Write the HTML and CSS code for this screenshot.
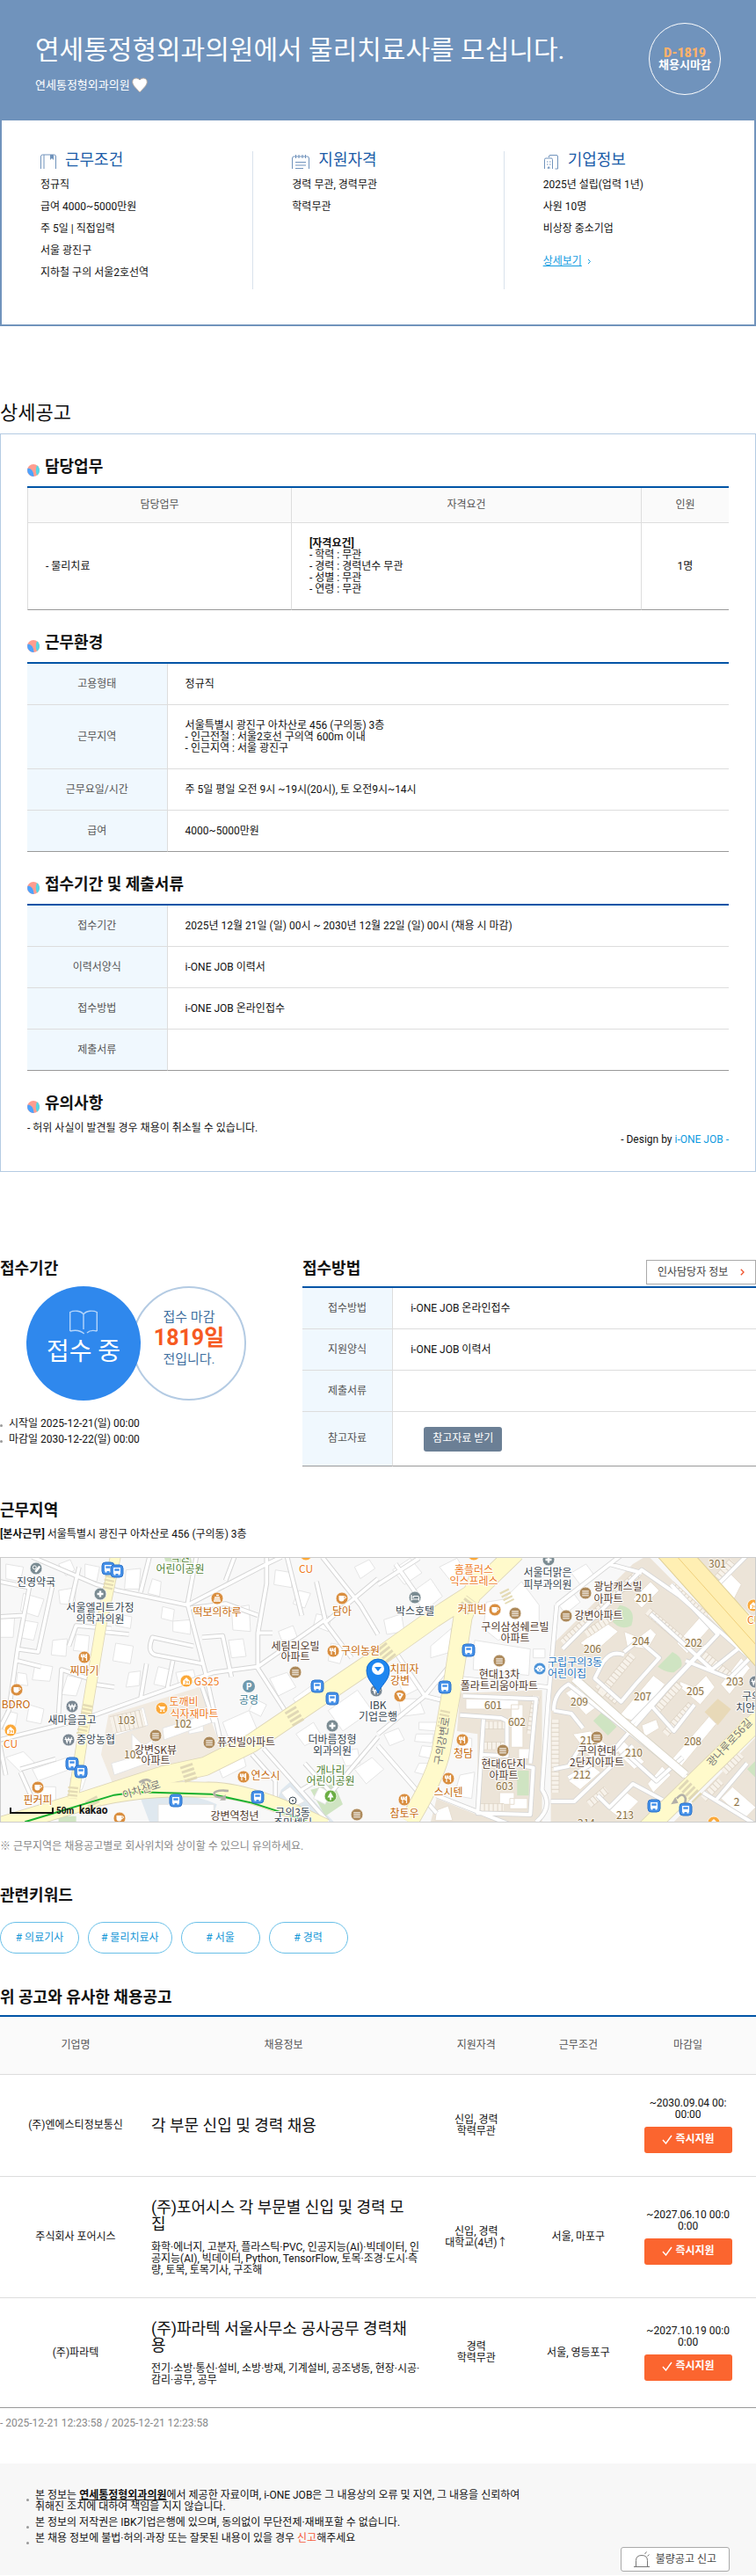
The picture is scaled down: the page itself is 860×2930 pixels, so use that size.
FILE: index.html
```html
<!DOCTYPE html>
<html lang="ko">
<head>
<meta charset="utf-8">
<meta name="viewport" content="width=device-width, initial-scale=1">
<title>연세통정형외과의원에서 물리치료사를 모십니다.</title>
<link rel="stylesheet" href="styles.css">
</head>
<body>
<svg class="defs" width="0" height="0" aria-hidden="true">
  <defs>
    <symbol id="mark" viewBox="0 0 14 14"><circle cx="7" cy="7" r="7" fill="#ff9d8f"/><path d="M11 1.300A7 7 0 0 1 11 12.700Q8.500 7 11 1.300z" fill="#55d7e6"/><path d="M.6 4.500Q7 5 7.600 13.900A7 7 0 0 1 .6 4.500z" fill="#4da3ff"/></symbol>
    <g id="bus"><rect x="-7" y="-7" width="14" height="14" rx="4" fill="#4590e8" stroke="#2d74cb"/><path d="M-4-4h8v7h-8z" fill="#fff"/><path d="M-2.700-2.700h5.400v2.500h-5.400z" fill="#4590e8"/><path d="M-3.500 3h2v1.500h-2zM1.500 3h2v1.500h-2z" fill="#fff"/></g>
    <g id="apt"><circle r="7" fill="#ad8a5c" stroke="#fff" stroke-width=".8"/><path d="M-3.500-3h7v6.500h-7z" fill="#fff"/><path d="M-2-4v8M0-4v8M2-4v8M-4-1h8M-4 1.500h8" stroke="#ad8a5c" stroke-width=".7"/></g>
    <g id="fork"><circle r="7" fill="#d98e3f" stroke="#fff" stroke-width=".8"/><path d="M-3.500-3.500v3h3v-3M-2-3.500v7.500M2.500 4v-7.500q-2 1-1.500 4h1.500" fill="none" stroke="#fff" stroke-width="1.200"/></g>
    <g id="cup"><circle r="7" fill="#d98e3f" stroke="#fff" stroke-width=".8"/><path d="M-3.500-3h6v3.500q0 3-3 3t-3-3z" fill="#fff"/><path d="M2.500-2q2-.5 2 1t-2.500 1.500" fill="none" stroke="#fff"/></g>
    <g id="store"><circle r="7" fill="#fba93a" stroke="#fff" stroke-width=".8"/><path d="M-4 0 0-4l4 4v4h-8z" fill="#fff"/><path d="M-2 0h1.500v3H-2M1 0v2h1.500M2.500 0v3" fill="none" stroke="#fba93a" stroke-width=".8"/></g>
    <g id="cart"><circle r="7" fill="#fba93a" stroke="#fff" stroke-width=".8"/><path d="M-4-3h1.500l.8 1H4L3 1.500h-4.500z" fill="#fff"/><circle cx="-1" cy="3.200" r="1" fill="#fff"/><circle cx="2.500" cy="3.200" r="1" fill="#fff"/></g>
    <g id="plus"><circle r="7" fill="#7a8b92" stroke="#fff" stroke-width=".8"/><path d="M0-3.500v7M-3.500 0h7" stroke="#fff" stroke-width="2.400"/></g>
    <g id="won"><circle r="7" fill="#7a8792" stroke="#fff" stroke-width=".8"/><path d="M-3.500-3l1.700 6L0-2l1.800 5 1.700-6M-4.500-.5h9" fill="none" stroke="#fff" stroke-width="1.200"/></g>
    <g id="pill"><circle r="7" fill="#7a8b92" stroke="#fff" stroke-width=".8"/><circle cx="-1.700" cy="-1.200" r="2" fill="none" stroke="#fff"/><path d="M0 3l3.500-4.500" stroke="#fff" stroke-width="2.800" stroke-linecap="round"/></g>
    <g id="bed"><circle r="7" fill="#7a8b92" stroke="#fff" stroke-width=".8"/><path d="M-4-3v6.500M-4 2h8.500v1.500M-1.500.5V-1.500h5q1 0 1 3M-3.300-.5h1" fill="none" stroke="#fff" stroke-width="1.200"/></g>
    <g id="cake"><circle r="7" fill="#d98e3f" stroke="#fff" stroke-width=".8"/><path d="M-4 3h8M-3.500 1h7M-3-1h6M-1-3.500h3" stroke="#fff" stroke-width="1.300"/></g>
    <g id="pizza"><circle r="7" fill="#d98e3f" stroke="#fff" stroke-width=".8"/><path d="M-4-3Q0-5 4-2L0 4.500z" fill="#fff"/><circle cx="0" cy="-1" r="1" fill="#d98e3f"/></g>
    <g id="tree"><circle r="7" fill="#6cae45" stroke="#fff" stroke-width=".8"/><path d="M0-5l3.500 6.500h-7zM-.8 1h1.600v3.500H-.8z" fill="#fff"/></g>
    <g id="kid"><circle r="7" fill="#4c93d8" stroke="#fff" stroke-width=".8"/><circle r="3.600" fill="#fff"/><circle cx="-4" r="1" fill="#fff"/><circle cx="4" r="1" fill="#fff"/><path d="M-1.500-.8v1M1.500-.8v1M-1 1.700h2" stroke="#4c93d8"/></g>
  </defs>
</svg>

<header class="hero">
  <div class="hero-text">
    <h1>연세통정형외과의원에서 물리치료사를 모십니다.</h1>
    <p class="hero-company">연세통정형외과의원
      <button class="like" type="button" aria-label="관심기업"><svg width="18" height="18" viewBox="0 0 18 18"><path d="M9 17C5 12.500.7 9 .7 5.200.7 0 7 0 9 3c2-3 8.300-3 8.300 2.200C17.300 9 13 12.500 9 17z" fill="#fff" stroke="#b3a79f"/></svg></button>
    </p>
  </div>
  <p class="dday"><strong>D-1819</strong><span>채용시마감</span></p>
</header>

<section class="summary">
  <div class="summary-col">
    <h2><svg width="18" height="18" viewBox="0 0 18 18"><path d="M4 17V1H2.500Q.5 1 .5 3v14M4 1h11.500q2 0 2 2v14" fill="none" stroke="#7093bc"/><path d="M11 1h4v6l-2-2-2 2z" fill="#7093bc"/></svg>근무조건</h2>
    <ul><li>정규직</li><li>급여 4000~5000만원</li><li>주 5일 | 직접입력</li><li>서울 광진구</li><li>지하철 구의 서울2호선역</li></ul>
  </div>
  <div class="summary-col">
    <h2><svg width="20" height="18" viewBox="0 0 20 18"><path d="M.5 17V5q0-2 2-2h15q2 0 2 2v12M4.500 1v4M8 1v4M12 1v4M15.500 1v4M4 9.500h12M4 13h12M4 16.500h9" fill="none" stroke="#7093bc"/></svg>지원자격</h2>
    <ul><li>경력 무관, 경력무관</li><li>학력무관</li></ul>
  </div>
  <div class="summary-col">
    <h2><svg width="18" height="18" viewBox="0 0 18 18"><path d="M1.500 17V6.500q0-1.500 1.500-1.500h6q1.500 0 1.500 1.500V17M6.500 4V3q0-1.500 1.500-1.500h7q1.500 0 1.500 1.500v14h-3" fill="none" stroke="#7093bc"/><path d="M4 9h1.500M7 9h1.500M4 12h1.500M7 12h1.500M5.500 17v-2h1.500v2" stroke="#7093bc" fill="none"/></svg>기업정보</h2>
    <ul><li>2025년 설립(업력 1년)</li><li>사원 10명</li><li>비상장 중소기업</li></ul>
    <a class="more" href="#company"><span>상세보기</span><svg width="5" height="7" viewBox="0 0 5 7"><path d="M1 1l2.500 2.500L1 6" fill="none" stroke="#0f9be0"/></svg></a>
  </div>
</section>

<main>
<h2 class="detail-title">상세공고</h2>
<section class="detail">
  <h3><svg width="14" height="14"><use href="#mark"/></svg>담당업무</h3>
  <table class="grid duties">
    <colgroup><col class="w-duty"><col class="w-req"><col class="w-num"></colgroup>
    <thead><tr><th scope="col">담당업무</th><th scope="col">자격요건</th><th scope="col">인원</th></tr></thead>
    <tbody><tr><td>- 물리치료</td><td><strong>[자격요건]</strong><br>- 학력 : 무관<br>- 경력 : 경력년수 무관<br>- 성별 : 무관<br>- 연령 : 무관</td><td class="center">1명</td></tr></tbody>
  </table>

  <h3><svg width="14" height="14"><use href="#mark"/></svg>근무환경</h3>
  <table class="grid info">
    <tbody>
      <tr><th scope="row">고용형태</th><td>정규직</td></tr>
      <tr class="tall"><th scope="row">근무지역</th><td>서울특별시 광진구 아차산로 456 (구의동) 3층<br>- 인근전철 : 서울2호선 구의역 600m 이내<br>- 인근지역 : 서울 광진구</td></tr>
      <tr><th scope="row">근무요일/시간</th><td>주 5일 평일 오전 9시 ~19시(20시), 토 오전9시~14시</td></tr>
      <tr><th scope="row">급여</th><td>4000~5000만원</td></tr>
    </tbody>
  </table>

  <h3><svg width="14" height="14"><use href="#mark"/></svg>접수기간 및 제출서류</h3>
  <table class="grid info">
    <tbody>
      <tr><th scope="row">접수기간</th><td>2025년 12월 21일 (일) 00시 ~ 2030년 12월 22일 (일) 00시 (채용 시 마감)</td></tr>
      <tr><th scope="row">이력서양식</th><td>i-ONE JOB 이력서</td></tr>
      <tr><th scope="row">접수방법</th><td>i-ONE JOB 온라인접수</td></tr>
      <tr><th scope="row">제출서류</th><td></td></tr>
    </tbody>
  </table>

  <h3><svg width="14" height="14"><use href="#mark"/></svg>유의사항</h3>
  <p>- 허위 사실이 발견될 경우 채용이 취소될 수 있습니다.</p>
  <p class="credit">- Design by <span>i-ONE JOB -</span></p>
</section>

<div class="apply">
  <section>
    <h3>접수기간</h3>
    <div class="circles">
      <div class="circle open"><svg width="32" height="28" viewBox="0 0 32 28"><path d="M.7 24V2.500Q4 .7 9 1.200 14 1.800 16 5q2-3.200 7-3.800 5-.5 8.300 1.300V24M16 5v17M.7 24q10-2.500 16 3M20 26q4-4 11.300-2" fill="none" stroke="#b5d5fa" stroke-width="1.400"/></svg><span>접수 중</span></div>
      <div class="circle left"><span>접수 마감</span><strong>1819일</strong><span>전입니다.</span></div>
    </div>
    <ul class="dates"><li>시작일 2025-12-21(일) 00:00</li><li>마감일 2030-12-22(일) 00:00</li></ul>
  </section>
  <section>
    <div class="method-head"><h3>접수방법</h3><button class="contact" type="button">인사담당자 정보<svg width="5" height="8" viewBox="0 0 5 8"><path d="M.8.8 4 4 .8 7.200" fill="none" stroke="#f0522a" stroke-width="1.300"/></svg></button></div>
    <table class="grid method">
      <tbody>
        <tr><th scope="row">접수방법</th><td>i-ONE JOB 온라인접수</td></tr>
        <tr><th scope="row">지원양식</th><td>i-ONE JOB 이력서</td></tr>
        <tr><th scope="row">제출서류</th><td></td></tr>
        <tr class="file"><th scope="row">참고자료</th><td><button class="download" type="button">참고자료 받기</button></td></tr>
      </tbody>
    </table>
  </section>
</div>

<section class="place">
  <h3>근무지역</h3>
  <p class="address"><strong>[본사근무]</strong> 서울특별시 광진구 아차산로 456 (구의동) 3층</p>
  <svg class="map" viewBox="0 0 860 300" preserveAspectRatio="xMidYMid slice" role="img" aria-label="근무지역 지도">
    <g transform="translate(0 -13) scale(.3333)" fill="none">
      <path d="M0 30h2590v930H0z" fill="#f8f8f8"/>
      <path d="M370 575 680 480l50 140 30 80-375 110-40-100z" fill="#f1eae0"/>
      <path d="M1890 330 2160 60l50-30 370 370v150l-370 400h-330V500zM2350 30h240v230zM2590 640l-300 310h300zM1570 500l280-10v460h-220V640l-70-10zM1490 860l200 80h-220z" fill="#ece4d8"/>
      <path d="M480 860q160-30 260 20l-20 60H510zM960 830l40-35 140 145h-130l-70-60z" fill="#dfe8ef"/>
      <path d="M200 920h60v20h-60M560 36h90l5 20-90-5M1060 830l80-20 30 70-60 40z" fill="#cfe4c2"/>
      <path d="M2085 250l30-50q60 10 40 70-40 20-70-20zM2245 410l50-50q40 20 30 50l-25 20q-30 0-55-20zM2055 565l50 50-30 30-50-50zM1765 765h40v85h-40zM2550 760l30-30v60z" fill="#cfe4c2"/>
      <path d="M2450 520l45 35-45 55-45-45z" fill="#e8d9b8"/>

      <g stroke="#e4e4e4" stroke-width="3" fill="#fff">
        <path d="M20 60l60 10-10 50-50-10zM200 60l40-15 15 35-30 20zM290 60l50 10-10 50-40-10zM430 80l50-5-5 70h-50zM520 110l30 10-5 50-40-10zM80 160l70 20-20 60-60-20zM200 150l60-10-5 60-50-5zM0 240h50l-5 70H0zM70 250l60 10-15 60-50-10zM180 320l50-5-5 60-50-5zM260 300l45 5-5 55-50-5zM400 230l50 10-5 40-50-10zM555 205l40 10-5 40-40-10zM590 255l60-5v50l-60-10zM395 330l60 10-10 60-60-10zM440 430l40-5-5 50-45 5zM540 410l40 10-10 60-45-10zM600 430l60-10 10 40-60 10zM120 400l60 10-10 50-60-5zM60 430l30 5 5 40-40-5zM230 440l50 10-20 60-50-5zM100 540l50 15-10 50-50-10zM20 560l40 10-10 60-40-5zM790 210l60-10 5 90-60-5zM780 320l50-5 10 60-50 5zM950 290l50-20 15 40-50 20zM940 80l60 10-5 50-60-10zM1020 150l40 10-20 50-40-15zM1210 70l50-25 20 30-50 35zM1080 230l50 10-10 50-50-20zM920 450l60-20 30 50-60 30zM1000 520l70-50 30 40-70 50zM1130 330l50 10-20 60-40-10zM760 600l90-40 30 70-90 50zM640 590l50-10 5 50-50 10zM870 520l40 20-20 40-40-20z"/>
        <path d="M380 590l110-40 15 60-110 35zM450 640l40 40 30-20 10 70-140 50-10-40 70-20zM555 620l160-50 10 30-165 60zM20 720l60-20 40 40-50 30zM110 760l120-40 10 40-110 40zM120 820h70v50h-50zM240 790l60-20-20 60-40 10zM540 880h190v60H540zM960 840l30-20 50 50-40 20zM740 740l90-30 10 40-80 40zM1010 640l60-40 30 50-60 30zM1120 560l100-70 50 70-100 70zM1090 820l40 20-20 40-40-20zM1210 760l60-40 40 40-60 50zM1160 700l60-10 10 50-50 10z"/>
        <path d="M1340 80l60-40 40 50-60 40zM1400 160l70-50 40 60-60 50zM1500 70l60-30 30 50-50 30zM1310 250l60-20 10 60-60 10zM1470 340l70-60v80l-70 20zM1660 190l60-10 60-60 60 80v60l-140 60-50-40zM1620 320l190 30-5 90-190-20zM1820 350h40v30h-40zM1900 190l50-40 30 40-50 40zM1950 90l50-30 30 40-50 30zM1350 440l50-20 40 60-60 30zM1360 520h70l20 50-80 10zM1430 600h60v30l-60-5zM1420 640h60l-5 30-60-5zM1440 680l50 5-10 40-50-10zM1430 740h30l-5 40-40-10zM1310 640l50-20 20 40-50 20zM1570 650l40 5v50l-50-5zM1570 780l50-10-10 90-60-10z"/>
      </g>
      <g stroke="#e6ddd0" stroke-width="3" fill="#fff">
        <path d="M1590 520h180v35h-180zM1745 540h40v145h-40zM1770 690h50v35h-50zM1705 840h50v40h-50zM1740 860h60v35h-60zM1490 900l40-15 15 50h-60zM1930 500l40-25 70 70-40 30zM1955 640l60-10 70 60-30 40-40-10zM1940 800l70-60 40 30-70 60zM2100 700l30-35 70 70-35 25zM2080 900l60-60 40 30-60 60zM2120 570l110-130 40 30-100 130-50-20zM1980 330l90-70 40 30-80 70zM2130 290l50 20 40-30 20 20-30 50-70-10zM2310 330l80-90 35 35-80 90zM2320 460l50 20 40-40 30 40-50 60-70-60zM2460 470l70-90 30 35-70 90zM2290 730l130-150 25 25-120 145zM2160 180l60-60 30 30-60 60zM2440 150l40-70 50 50-30 60zM2460 860l40-40 80 70-40 40zM2190 610l50-20 10 30-50 30zM2210 810l50-60 30 30-60 60z"/>
      </g>
      <g stroke="#ddd3c5">
        <path d="M1920 330l260-240M1830 510l-20 130M1895 590v250M2020 540l90-110 50-60M2210 220l130 110M2290 130l120 110M2390 360l110 90M2240 560l80-90M2270 640l90-100M2000 300l90-60M2060 760l60-50M2010 880l60-50M1640 610h90M1650 680h80M1640 890h80M2470 770l60-60M2400 860l60-60M2040 470l70 60M2440 120l60-70" stroke-width="28"/>
        <path d="M380 610l110-25" stroke-width="60"/>
      </g>
      <g stroke="#f7f2ea">
        <path d="M1920 330l260-240M1830 510l-20 130M1895 590v250M2020 540l90-110 50-60M2210 220l130 110M2290 130l120 110M2390 360l110 90M2240 560l80-90M2270 640l90-100M2000 300l90-60M2060 760l60-50M2010 880l60-50M1640 610h90M1650 680h80M1640 890h80M2470 770l60-60M2400 860l60-60M2040 470l70 60M2440 120l60-70" stroke-width="24" stroke-dasharray="12 3"/>
        <path d="M380 610l110-25" stroke-width="56" stroke-dasharray="12 3"/>
      </g>

      <g stroke-linejoin="round">
        <path stroke="#d5d5d5" stroke-width="17" d="M110 36 330 130 400 150l240 50 270-140 50-24M0 120l100 20M100 140 60 350 30 560 0 620M180 130l-50 230-70-10M60 390l80 20M0 240l80-5M270 70l-30 130M510 36l-30 120M670 36l-30 160 60 230 60 270M650 210l120-15 110 40M800 36l-30 80M910 36v90l-30 170 0 120 90 140M880 295h50M980 36l50 200M1080 120l30 130M1110 250l-230 160M1100 36 1230 200l60 100M1290 110l-180 150 90 120M310 580l420-150 150-20M320 580 0 660M660 340 520 310q-20 50 10 60l160 30M690 310l70-5 30 140M590 390l-20 100M500 400l-20 120M380 280l-120-10-25 70M340 290l100 10M200 570l10-150 120 40M320 470l70 10M690 480l40 120M70 760l120-35M70 770l40 90M0 680l20 100M900 690l220 250M860 710l80 90v60M1040 740l90 100 160-190M1030 830l100-60"/>
        <path stroke="#fff" stroke-width="11" d="M110 36 330 130 400 150l240 50 270-140 50-24M0 120l100 20M100 140 60 350 30 560 0 620M180 130l-50 230-70-10M60 390l80 20M0 240l80-5M270 70l-30 130M510 36l-30 120M670 36l-30 160 60 230 60 270M650 210l120-15 110 40M800 36l-30 80M910 36v90l-30 170 0 120 90 140M880 295h50M980 36l50 200M1080 120l30 130M1110 250l-230 160M1100 36 1230 200l60 100M1290 110l-180 150 90 120M310 580l420-150 150-20M320 580 0 660M660 340 520 310q-20 50 10 60l160 30M690 310l70-5 30 140M590 390l-20 100M500 400l-20 120M380 280l-120-10-25 70M340 290l100 10M200 570l10-150 120 40M320 470l70 10M690 480l40 120M70 760l120-35M70 770l40 90M0 680l20 100M900 690l220 250M860 710l80 90v60M1040 740l90 100 160-190M1030 830l100-60"/>
        <path stroke="#d5d5d5" stroke-width="17" d="M1290 130l140-90M1350 60l70 100M1290 640l160-130 90-110M1350 360l100 150 80 20M1290 680l200 230M1490 850l330 130M1580 510l250 10-20 220M1570 575l140 10 20 10v120l-90-5M1650 590l-20 320 180 5 10-160-60-10M1570 450l300 30M1900 200l-30 340-20 290q40 60-20 110M1900 200l220-170M1920 350l270-270 130 90 240 210-70 70-150-60M2080 60l110 30M2220 230l210 190 100-80M2290 130l160 170-160 170-200 230-150 90M1890 560q0-60 50-90l420 330M1890 560l60 10 40 50M2130 370q-50-20-80 40l-20 40 90 80 50-60 80-90-70-60-50 40M2150 610l260-270M2220 540l80 90 70-90M2330 720l-90 80-110-100M1880 870h80l200-190M2040 850l40 40 80-80 130 70M2440 870l110-130M2400 840l180 110M1890 760l50-10 50-80M2450 130l100-100"/>
        <path stroke="#fff" stroke-width="12" d="M1290 130l140-90M1350 60l70 100M1290 640l160-130 90-110M1350 360l100 150 80 20M1290 680l200 230M1490 850l330 130M1580 510l250 10-20 220M1570 575l140 10 20 10v120l-90-5M1650 590l-20 320 180 5 10-160-60-10M1570 450l300 30M1900 200l-30 340-20 290q40 60-20 110M1900 200l220-170M1920 350l270-270 130 90 240 210-70 70-150-60M2080 60l110 30M2220 230l210 190 100-80M2290 130l160 170-160 170-200 230-150 90M1890 560q0-60 50-90l420 330M1890 560l60 10 40 50M2130 370q-50-20-80 40l-20 40 90 80 50-60 80-90-70-60-50 40M2150 610l260-270M2220 540l80 90 70-90M2330 720l-90 80-110-100M1880 870h80l200-190M2040 850l40 40 80-80 130 70M2440 870l110-130M2400 840l180 110M1890 760l50-10 50-80M2450 130l100-100"/>
        <path stroke="#d9d4c6" stroke-width="32" d="M1960 450l180 160 200 170"/>
        <path stroke="#fff" stroke-width="26" d="M1960 450l180 160 200 170"/>
        <path stroke="#ddd5b8" stroke-width="38" d="M395 30 345 270 290 600 250 860"/>
        <path stroke="#ddd5b8" stroke-width="66" d="M0 955 250 880 560 780l140-30 160-80 430-290 190-135 140-90L1760 20M1640 90l-60 150-40 260-35 200q-20 90-110 240M2600 580 2190 980"/>
        <path stroke="#ddd5b8" stroke-width="54" d="M260 880q200-60 440-50 150-5 410 125"/>
        <path stroke="#dfcf98" stroke-width="102" d="M2280 0l340 380"/>
        <path stroke="#fffacb" stroke-width="33" d="M395 30 345 270 290 600 250 860"/>
        <path stroke="#fffacb" stroke-width="61" d="M0 955 250 880 560 780l140-30 160-80 430-290 190-135 140-90L1760 20M1640 90l-60 150-40 260-35 200q-20 90-110 240M2600 580 2190 980"/>
        <path stroke="#fffacb" stroke-width="49" d="M260 880q200-60 440-50 150-5 410 125"/>
        <path stroke="#ffefb3" stroke-width="96" d="M2280 0l340 380"/>
        <path stroke="#efcf7b" stroke-width="3" d="M2280 0l340 380"/>
      </g>
      <path stroke="#e4dbb5" stroke-width="34" stroke-dasharray="7 6" d="M376 100l-10 50M300 540l-8 40M284 610l-8 40M250 820l-4 40M1520 560l-12 60M1720 150l20 40"/>
      <path stroke="#e0d8b6" stroke-width="44" stroke-dasharray="9 7" d="M635 745l20 60M990 555l30 50M1580 220l30-40M1300 340l40 50M2330 810l50 50M310 860l15 30"/>
      <path stroke="#17b030" stroke-width="6" d="M85 940 390 848l80-10 250 7 140 30 140 45 50 20"/>
      <path stroke="#b3b0a8" stroke-width="8" d="M780 834q-45-5-50 10 5 15 40 12M475 805q30-20 45 5 5 20-30 20M2310 860q20-25 30 0 0 25-20 35"/>
      <path fill="#b3b0a8" d="M750 866l20-20v20zM480 815l10-20 10 20zM2290 880l15-25 10 20z"/>
    </g>

    <g class="road-name">
      <text x="161" y="268" transform="rotate(-17 161 264)">아차산로</text>
      <text x="503" y="212" transform="rotate(-80 503 208)">구의강변로</text>
      <text x="830" y="214" transform="rotate(-47 830 210)">광나루로56길</text>
    </g>
    <g class="lot">
      <text x="144" y="189">103</text><text x="208" y="193">102</text><text x="151" y="228">101</text>
      <text x="733" y="50">201</text><text x="816" y="11">301</text><text x="674" y="108">206</text><text x="729" y="99">204</text><text x="789" y="101">202</text><text x="836" y="145">203</text><text x="791" y="156">205</text><text x="731" y="162">207</text><text x="659" y="168">209</text><text x="561" y="172">601</text><text x="588" y="191">602</text><text x="574" y="264">603</text><text x="670" y="212">211</text><text x="662" y="251">212</text><text x="721" y="226">210</text><text x="788" y="213">208</text><text x="711" y="297">213</text><text x="667" y="306">214</text><text x="838" y="282">2</text>
    </g>
    <g transform="translate(8 8)">
      <use href="#pill" x="33" y="4"/><use href="#bus" x="115" y="4"/><use href="#bus" x="125" y="7"/><use href="#plus" x="106" y="33"/><use href="#cake" x="239" y="38"/><use href="#cup" x="381" y="38"/><use href="#fork" x="88" y="105"/><use href="#cup" x="11" y="142"/><use href="#won" x="74" y="161"/><use href="#store" x="4" y="188"/><use href="#store" x="204" y="132"/><use href="#cart" x="176" y="163"/><use href="#apt" x="169" y="194"/><use href="#apt" x="328" y="122"/><use href="#fork" x="371" y="98"/><use href="#bus" x="353" y="138"/><use href="#bus" x="370" y="152"/><use href="#plus" x="370" y="183"/><use href="#won" x="70" y="199"/><use href="#apt" x="230" y="202"/><use href="#bus" x="74" y="226"/><use href="#bus" x="84" y="235"/><use href="#cup" x="35" y="253"/><use href="#fork" x="269" y="241"/><use href="#bus" x="192" y="268"/><use href="#bus" x="285" y="264"/><use href="#tree" x="368" y="263"/><use href="#apt" x="398" y="284"/><use href="#cup" x="128" y="288"/><use href="#store" x="340" y="-12"/>
      <use href="#store" x="531" y="-12"/><use href="#plus" x="616" y="-6"/><use href="#bed" x="464" y="37"/><use href="#cup" x="555" y="51"/><use href="#apt" x="578" y="55"/><use href="#apt" x="658" y="32"/><use href="#apt" x="636" y="58"/><use href="#bus" x="525" y="97"/><use href="#bus" x="498" y="139"/><use href="#apt" x="560" y="109"/><use href="#kid" x="606" y="118"/><use href="#pizza" x="447" y="149"/><use href="#fork" x="518" y="199"/><use href="#apt" x="564" y="211"/><use href="#fork" x="502" y="243"/><use href="#fork" x="452" y="267"/><use href="#apt" x="671" y="196"/><use href="#bus" x="736" y="274"/><use href="#bus" x="772" y="278"/><use href="#store" x="804" y="293"/><use href="#store" x="849" y="46"/><use href="#won" x="851" y="133"/><use href="#won" x="420" y="143"/>
    </g>
    <circle cx="283" cy="146" r="7" fill="#6f99ad"/><text class="parking" x="283" y="150">P</text>
    <circle cx="333" cy="276" r="4" fill="#fff" stroke="#3c4a55"/><circle cx="333" cy="276" r="1" fill="#3c4a55"/>

    <g class="name slate">
      <text x="41" y="32">진영약국</text><text x="114" y="61">서울엘리트가정</text><text x="114" y="74">의학과의원</text><text x="82" y="189">새마을금고</text><text x="109" y="211">중앙농협</text><text x="430" y="172">IBK</text><text x="430" y="185">기업은행</text><text x="378" y="211">더바름정형</text><text x="378" y="224">외과의원</text><text x="623" y="21">서울더맑은</text><text x="623" y="35">피부과의원</text><text x="472" y="65">박스호텔</text><text x="855" y="162">구의</text><text x="848" y="175">치안</text><text x="333" y="294">구의3동</text><text x="333" y="306">주민센터</text>
    </g>
    <g class="name teal"><text x="283" y="166">공영</text></g>
    <g class="name blue"><text x="654" y="123">구립구의3동</text><text x="645" y="136">어린이집</text></g>
    <g class="name green"><text x="205" y="4">낙원</text><text x="205" y="17">어린이공원</text><text x="376" y="246">개나리</text><text x="376" y="258">어린이공원</text></g>
    <g class="name brown">
      <text x="336" y="105">세림리오빌</text><text x="336" y="117">아파트</text><text x="177" y="223">강변SK뷰</text><text x="177" y="235">아파트</text><text x="280" y="214">퓨전빌아파트</text><text x="267" y="298">강변역청년</text><text x="703" y="37">광남캐스빌</text><text x="692" y="51">아파트</text><text x="681" y="70">강변아파트</text><text x="586" y="83">구의삼성쉐르빌</text><text x="586" y="96">아파트</text><text x="568" y="137">현대13차</text><text x="568" y="150">폴라트리움아파트</text><text x="573" y="239">현대6단지</text><text x="573" y="252">아파트</text><text x="679" y="224">구의현대</text><text x="679" y="237">2단지아파트</text>
    </g>
    <g class="name food">
      <text x="247" y="66">떡보의하루</text><text x="389" y="65">담아</text><text x="410" y="110">구의농원</text><text x="96" y="133">찌마기</text><text x="18" y="171">BDRO</text><text x="302" y="252">연스시</text><text x="43" y="280">핀커피</text><text x="537" y="63">커피빈</text><text x="460" y="131">치피자</text><text x="455" y="144">강변</text><text x="527" y="227">청담</text><text x="510" y="271">스시텐</text><text x="460" y="295">참토우</text>
    </g>
    <g class="name shop">
      <text x="348" y="17">CU</text><text x="235" y="145">GS25</text><text x="209" y="168">도깨비</text><text x="221" y="182">식자재마트</text><text x="12" y="216">CU</text><text x="539" y="18">홈플러스</text><text x="539" y="31">익스프레스</text><text x="858" y="75">CU</text>
    </g>
    <path d="M430 154c-2-8-13-14-13-26a13 13 0 0 1 26 0c0 12-11 18-13 26z" fill="#1e86f0" stroke="#1269cc"/><circle cx="430" cy="126" r="7" fill="#fff"/><path d="M426 124h8l-4 5z" fill="#1e86f0"/>
    <path d="M12 284v6h48v-6" fill="none" stroke="#111" stroke-width="2"/>
    <text class="scale" x="64" y="291">50m</text><text class="scale kakao" x="90" y="291">kakao</text>
  </svg>
  <p class="note">※ 근무지역은 채용공고별로 회사위치와 상이할 수 있으니 유의하세요.</p>
</section>

<section class="keywords">
  <h3>관련키워드</h3>
  <div class="chips"><a href="#k1"># 의료기사</a><a href="#k2"># 물리치료사</a><a href="#k3"># 서울</a><a href="#k4"># 경력</a></div>
</section>

<section class="similar">
  <h3>위 공고와 유사한 채용공고</h3>
  <table class="jobs">
    <colgroup><col class="w-company"><col class="w-info"><col class="w-qual"><col class="w-cond"><col class="w-due"></colgroup>
    <thead><tr><th scope="col">기업명</th><th scope="col">채용정보</th><th scope="col">지원자격</th><th scope="col">근무조건</th><th scope="col">마감일</th></tr></thead>
    <tbody>
      <tr class="job-1"><td>(주)엔에스티정보통신</td><td class="info-cell"><a href="#j1">각 부문 신입 및 경력 채용</a></td><td>신입, 경력<br>학력무관</td><td></td><td>~2030.09.04 00:<br>00:00<button class="now" type="button"><svg width="12" height="11" viewBox="0 0 12 11"><path d="M1 6l3.500 4L11 1" fill="none" stroke="#fff" stroke-width="1.400"/></svg>즉시지원</button></td></tr>
      <tr class="job-2"><td>주식회사 포어시스</td><td class="info-cell"><a href="#j2">(주)포어시스 각 부문별 신입 및 경력 모<br>집</a><p>화학·에너지, 고분자, 플라스틱·PVC, 인공지능(AI)·빅데이터, 인<br>공지능(AI), 빅데이터, Python, TensorFlow, 토목·조경·도시·측<br>량, 토목, 토목기사, 구조해</p></td><td>신입, 경력<br>대학교(4년)↑</td><td>서울, 마포구</td><td>~2027.06.10 00:0<br>0:00<button class="now" type="button"><svg width="12" height="11" viewBox="0 0 12 11"><path d="M1 6l3.500 4L11 1" fill="none" stroke="#fff" stroke-width="1.400"/></svg>즉시지원</button></td></tr>
      <tr class="job-3"><td>(주)파라텍</td><td class="info-cell"><a href="#j3">(주)파라텍 서울사무소 공사공무 경력채<br>용</a><p>전기·소방·통신·설비, 소방·방재, 기계설비, 공조냉동, 현장·시공·<br>감리·공무, 공무</p></td><td>경력<br>학력무관</td><td>서울, 영등포구</td><td>~2027.10.19 00:0<br>0:00<button class="now" type="button"><svg width="12" height="11" viewBox="0 0 12 11"><path d="M1 6l3.500 4L11 1" fill="none" stroke="#fff" stroke-width="1.400"/></svg>즉시지원</button></td></tr>
    </tbody>
  </table>
  <p class="stamp">- 2025-12-21 12:23:58 / 2025-12-21 12:23:58</p>
</section>
</main>

<footer class="notice">
  <ul>
    <li>본 정보는 <a class="company" href="#company">연세통정형외과의원</a>에서 제공한 자료이며, i-ONE JOB은 그 내용상의 오류 및 지연, 그 내용을 신뢰하여<br>취해진 조치에 대하여 책임을 지지 않습니다.</li>
    <li>본 정보의 저작권은 IBK기업은행에 있으며, 동의없이 무단전제·재배포할 수 없습니다.</li>
    <li>본 채용 정보에 불법·허의·과장 또는 잘못된 내용이 있을 경우 <a class="report-link" href="#report">신고</a>해주세요</li>
  </ul>
  <button class="report" type="button"><svg width="18" height="18" viewBox="0 0 18 18"><path d="M0 17.500h18M2.500 17V10.500q0-6 6.500-6t6.500 6V17M12.500 3l2-2.500M15.500 5.500l2-2" fill="none" stroke="#777"/></svg>불량공고 신고</button>
</footer>
</body>
</html>
```

FILE: styles.css
```css
* { box-sizing: border-box; }
body {
  margin: 0;
  background: #fff;
  color: #111;
  font: 12px/13px Roboto, "Noto Sans CJK KR", sans-serif;
}
h1, h2, h3, p, ul { margin: 0; padding: 0; }
ul { list-style: none; }
a { color: inherit; text-decoration: none; }
button { font: inherit; color: inherit; cursor: pointer; }
.defs { position: absolute; }

h3 { font-size: 18px; line-height: 20px; font-weight: 700; }

/* Title band */
.hero {
  display: flex;
  justify-content: space-between;
  padding: 26px 40px 29px;
  background: #7093bc;
  color: #fff;
}
.hero-text { padding-top: 11px; }
.hero h1 { font-size: 30px; line-height: 40px; font-weight: 400; }
.hero-company { display: flex; align-items: center; gap: 2px; margin-top: 10px; font-size: 13px; line-height: 20px; }
.like { display: flex; padding: 0; border: 0; background: none; }
.dday {
  display: flex;
  flex: none;
  flex-direction: column;
  align-items: center;
  justify-content: center;
  width: 82px;
  height: 82px;
  border: 1px solid #fff;
  border-radius: 50%;
  font-size: 13px;
  line-height: 14px;
  font-weight: 700;
}
.dday strong { color: #ffb26b; font-size: 14px; }

.summary {
  display: grid;
  grid-template-columns: repeat(3, 1fr);
  padding: 35px 0 40px;
  border: 2px solid #7093bc;
  border-top: 0;
}
.summary-col { min-height: 157px; padding-left: 44px; }
.summary-col + .summary-col { border-left: 1px solid #d9e2ec; }
.summary h2 {
  display: flex;
  align-items: center;
  gap: 10px;
  height: 20px;
  margin-bottom: 6px;
  color: #1c5ca8;
  font-size: 18px;
  line-height: 20px;
  font-weight: 400;
}
.summary h2 svg { margin-top: 4px; }
.summary li { line-height: 25px; }
.more { display: inline-flex; align-items: center; gap: 6px; margin-top: 12px; line-height: 25px; color: #0f9be0; }
.more span { text-decoration: underline; }

/* Detailed posting */
.detail-title { margin: 86px 0 10px; font-size: 22px; line-height: 26px; font-weight: 400; }
.detail { padding: 0 30px 29px; border: 1px solid #b4cbe3; }
.detail h3 { display: flex; align-items: center; gap: 6px; height: 20px; margin: 27px 0 12px; }
.detail h3 svg { margin-top: 8px; }
.credit { text-align: right; }
.credit span { color: #0f9be0; }

.grid { width: 100%; border-spacing: 0; border-top: 2px solid #0054a6; table-layout: fixed; }
.grid th, .grid td { padding: 0 20px; border-bottom: 1px solid #ddd; }
.grid th { color: #555; font-weight: 400; text-align: center; }
.grid tbody tr:last-child > * { border-bottom-color: #999; }
.grid tbody th { padding: 0; background: #f0f8fe; border-right: 1px solid #ddd; }
.grid tr { height: 47px; }
.grid .tall { height: 73px; }
.grid .file { height: 62px; }
.info th { width: 20%; }
.method th { width: 20%; }

.duties thead tr { height: 40px; }
.duties thead th { padding: 0; background: #fafafa; }
.duties tbody tr { height: 99px; }
.duties th, .duties td { border-left: 1px solid #ddd; }
.grid .center { padding: 0; text-align: center; }
.w-duty { width: 300px; }
.w-num { width: 100px; }

/* Period and method */
.apply { display: grid; grid-template-columns: 2fr 3fr; margin-top: 100px; }
.circles { display: flex; margin: 10px 0 17px 30px; }
.circle {
  display: flex;
  flex: none;
  flex-direction: column;
  align-items: center;
  width: 130px;
  height: 130px;
  border-radius: 50%;
}
.circle.open { z-index: 1; padding-top: 27px; background: #2f88ed; color: #fff; font-size: 28px; line-height: 40px; }
.circle.left { margin-left: -10px; padding-top: 22px; border: 2px solid #b4cbe3; color: #3f6f9f; font-size: 15px; line-height: 22px; }
.circle strong { color: #f65a22; font-size: 25px; line-height: 26px; }
.dates li, .notice li { position: relative; }
.dates li { padding-left: 10px; line-height: 18px; }
.dates li::before, .notice li::before {
  content: "";
  position: absolute;
  left: 0;
  top: 10px;
  width: 3px;
  height: 3px;
  border-radius: 50%;
  background: #999;
}
.method-head { display: flex; justify-content: space-between; height: 30px; }
.contact {
  display: flex;
  align-items: center;
  justify-content: space-between;
  width: 125px;
  height: 28px;
  padding: 0 12px;
  border: 1px solid #aaa;
  background: #fff;
  color: #444;
}
.download { height: 28px; margin-left: 15px; padding: 0 10px; border: 0; border-radius: 3px; background: #6b7f95; color: #fff; }

/* Location */
.place { margin-top: 40px; }
.address { margin: 7px 0 16px; line-height: 20px; }
.map { display: block; width: 100%; height: 302px; border: 1px solid #ccc; font-family: "Noto Sans CJK KR", sans-serif; }
.name text, .lot text, .road-name text { font-size: 12px; text-anchor: middle; paint-order: stroke; stroke: #fff; stroke-width: 2px; stroke-linejoin: round; }
.slate { fill: #36454f; }
.teal { fill: #3c7a91; }
.blue { fill: #2573bd; }
.green { fill: #4d8030; }
.brown { fill: #4f382b; }
.food { fill: #c5690a; }
.shop { fill: #ee7a1c; }
.lot { fill: #8a7044; }
.lot text { stroke: #fbf7ef; }
.road-name { fill: #777; }
.road-name text { stroke: #fffacb; }
.parking { fill: #fff; font-size: 10px; font-weight: 700; text-anchor: middle; }
.scale { font-family: Roboto, sans-serif; font-size: 10px; font-weight: 700; fill: #111; }
.kakao { font-size: 12px; }
.note { margin-top: 17px; line-height: 20px; color: #888; }

/* Keywords */
.keywords { margin-top: 36px; }
.chips { display: flex; flex-wrap: wrap; gap: 10px; margin-top: 20px; }
.chips a {
  min-width: 90px;
  padding: 0 14px;
  border: 1px solid #67bfe8;
  border-radius: 18px;
  color: #1296d6;
  line-height: 34px;
  text-align: center;
}

/* Similar postings */
.similar { margin-top: 40px; }
.jobs { width: 100%; margin-top: 10px; border-spacing: 0; border-top: 2px solid #0054a6; table-layout: fixed; }
.jobs th, .jobs td { padding: 0; border-bottom: 1px solid #ddd; text-align: center; }
.jobs thead tr { height: 66px; }
.jobs th { background: #fafafa; color: #555; font-weight: 400; }
.jobs .info-cell { text-align: left; white-space: nowrap; }
.info-cell a { display: block; font-size: 18px; line-height: 19px; }
.info-cell p { margin-top: 11px; }
.jobs tbody tr:last-child td { border-bottom-color: #999; }
.job-1 { height: 116px; }
.job-2 { height: 138px; }
.job-3 { height: 125px; }
.w-company { width: 20%; }
.w-info { width: 35%; }
.w-qual { width: 16%; }
.w-cond { width: 11%; }
.w-due { width: 18%; }
.now {
  display: flex;
  align-items: center;
  justify-content: center;
  gap: 4px;
  width: 100px;
  height: 30px;
  margin: 7px auto 0;
  padding: 0 0 2px;
  border: 0;
  border-radius: 3px;
  background: #fb652f;
  color: #fff;
  font-weight: 700;
}
.stamp { margin-top: 7px; color: #888; line-height: 20px; }

/* Notice */
.notice { margin-top: 36px; padding: 30px 30px 4px; background: #f7f7f7; }
.notice li { padding-left: 10px; }
.notice li + li { margin-top: 5px; }
.company { font-weight: 700; text-decoration: underline; }
.report-link { color: #f65a3a; }
.report {
  display: flex;
  align-items: center;
  justify-content: space-between;
  width: 124px;
  height: 28px;
  margin: 3px 0 0 auto;
  padding: 0 14px;
  border: 1px solid #aaa;
  border-radius: 3px;
  background: #fff;
  color: #444;
}
```
